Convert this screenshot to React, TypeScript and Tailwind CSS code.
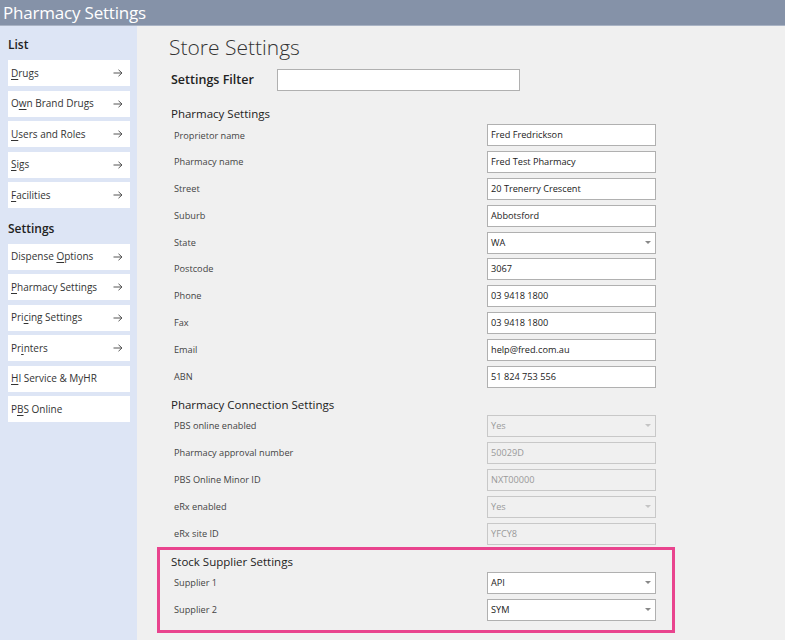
import React from 'react';

type Row = { label: string; value: string; select?: boolean; disabled?: boolean };

const pharmacyRows: Row[] = [
    { label: 'Proprietor name', value: 'Fred Fredrickson' },
    { label: 'Pharmacy name', value: 'Fred Test Pharmacy' },
    { label: 'Street', value: '20 Trenerry Crescent' },
    { label: 'Suburb', value: 'Abbotsford' },
    { label: 'State', value: 'WA', select: true },
    { label: 'Postcode', value: '3067' },
    { label: 'Phone', value: '03 9418 1800' },
    { label: 'Fax', value: '03 9418 1800' },
    { label: 'Email', value: 'help@fred.com.au' },
    { label: 'ABN', value: '51 824 753 556' },
];

const connectionRows: Row[] = [
    { label: 'PBS online enabled', value: 'Yes', select: true, disabled: true },
    { label: 'Pharmacy approval number', value: '50029D', disabled: true },
    { label: 'PBS Online Minor ID', value: 'NXT00000', disabled: true },
    { label: 'eRx enabled', value: 'Yes', select: true, disabled: true },
    { label: 'eRx site ID', value: 'YFCY8', disabled: true },
];

const supplierRows: Row[] = [
    { label: 'Supplier 1', value: 'API', select: true },
    { label: 'Supplier 2', value: 'SYM', select: true },
];

// sidebar links: [before, accessKey, after, hasArrow]
const listLinks: [string, string, string, boolean][] = [
    ['', 'D', 'rugs', true],
    ['O', 'w', 'n Brand Drugs', true],
    ['', 'U', 'sers and Roles', true],
    ['', 'S', 'igs', true],
    ['', 'F', 'acilities', true],
];

const settingsLinks: [string, string, string, boolean][] = [
    ['Dispense ', 'O', 'ptions', true],
    ['', 'P', 'harmacy Settings', true],
    ['Pri', 'c', 'ing Settings', true],
    ['Pr', 'i', 'nters', true],
    ['', 'H', 'I Service & MyHR', false],
    ['P', 'B', 'S Online', false],
];

function SideLink({ link }: { link: [string, string, string, boolean] }) {
    const [before, key, after, arrow] = link;
    return (
        <div className="h-[26px] mb-[4.5px] bg-white flex items-center pl-[3px] pr-[7px] text-[10px] text-[#333] whitespace-nowrap">
            <span>
                {before}
                <span className="underline underline-offset-2">{key}</span>
                {after}
            </span>
            {arrow && (
                <svg className="ml-auto" width="10" height="8" viewBox="0 0 10 8">
                    <path d="M0.5 4 H9 M5.5 0.8 L9 4 L5.5 7.2" stroke="#555" strokeWidth="1" fill="none" />
                </svg>
            )}
        </div>
    );
}

function Field({ row }: { row: Row }) {
    return (
        <div className="h-[26.8px] flex items-center">
            <span className="pl-[5px] text-[9.2px] text-[#444] whitespace-nowrap">{row.label}</span>
            <div
                className={`ml-auto w-[169px] h-[22px] border flex items-center pl-[3px] pr-[4px] text-[9.2px] ${
                    row.disabled
                        ? 'bg-[#f0f0f0] border-[#c8c8c8] text-[#9a9a9a]'
                        : 'bg-white border-[#b0b0b0] text-[#222]'
                }`}
            >
                <span>{row.value}</span>
                {row.select && (
                    <svg className="ml-auto" width="6" height="4" viewBox="0 0 6 4">
                        <path d="M0 0 L6 0 L3 3 Z" fill={row.disabled ? '#c4c4c4' : '#888'} />
                    </svg>
                )}
            </div>
        </div>
    );
}

export default function App() {
    return (
        <div className="w-[788px] h-[640px] bg-white overflow-hidden font-['Open_Sans',sans-serif]">
            <div className="w-[785px] h-[640px] flex flex-col bg-[#f0f0f0]">
                <header className="h-[26px] shrink-0 bg-[#8592a8] border-b border-[#a9b3c4] flex items-center pl-[3px] text-white text-[17px] tracking-[-0.2px]">
                    Pharmacy Settings
                </header>

                <div className="flex flex-1">
                    {/* sidebar */}
                    <aside className="w-[137px] shrink-0 bg-[#dde5f5] pl-[8px] pr-[7px]">
                        <h3 className="mt-[10px] h-[18px] mb-[6px] leading-[18px] text-[12px] font-semibold text-[#222]">List</h3>
                        {listLinks.map((l, i) => (
                            <SideLink key={i} link={l} />
                        ))}
                        <h3 className="mt-[11.5px] h-[18px] mb-[6px] leading-[18px] text-[12px] font-semibold text-[#222]">Settings</h3>
                        {settingsLinks.map((l, i) => (
                            <SideLink key={i} link={l} />
                        ))}
                    </aside>

                    {/* main */}
                    <main className="flex-1 pl-[32px]">
                        <div className="w-[487px]">
                            <h1 className="mt-[6px] h-[30px] leading-[30px] text-[21px] font-light text-[#333]">Store Settings</h1>
                            <div className="mt-[7px] h-[22px] flex items-center">
                                <span className="pl-[2px] w-[108px] text-[12.5px] font-semibold text-[#222]">Settings Filter</span>
                                <div className="w-[243px] h-[22px] bg-white border border-[#b0b0b0]" />
                            </div>

                            <h2 className="mt-[14px] h-[17px] leading-[17px] pl-[2px] text-[11.5px] text-[#222]">Pharmacy Settings</h2>
                            {pharmacyRows.map((r) => (
                                <Field key={r.label} row={r} />
                            ))}

                            <h2 className="mt-[6px] h-[17px] leading-[17px] pl-[2px] text-[11.5px] text-[#222]">Pharmacy Connection Settings</h2>
                            {connectionRows.map((r) => (
                                <Field key={r.label} row={r} />
                            ))}

                            <div className="-ml-[12px] w-[518px] border-[3px] border-[#e9448e] pt-[3px] pb-[6px] pl-[9px] pr-[16px]">
                                <h2 className="h-[17px] leading-[17px] pl-[2px] text-[11.5px] text-[#222]">Stock Supplier Settings</h2>
                                {supplierRows.map((r) => (
                                    <Field key={r.label} row={r} />
                                ))}
                            </div>
                        </div>
                    </main>
                </div>
            </div>
        </div>
    );
}
